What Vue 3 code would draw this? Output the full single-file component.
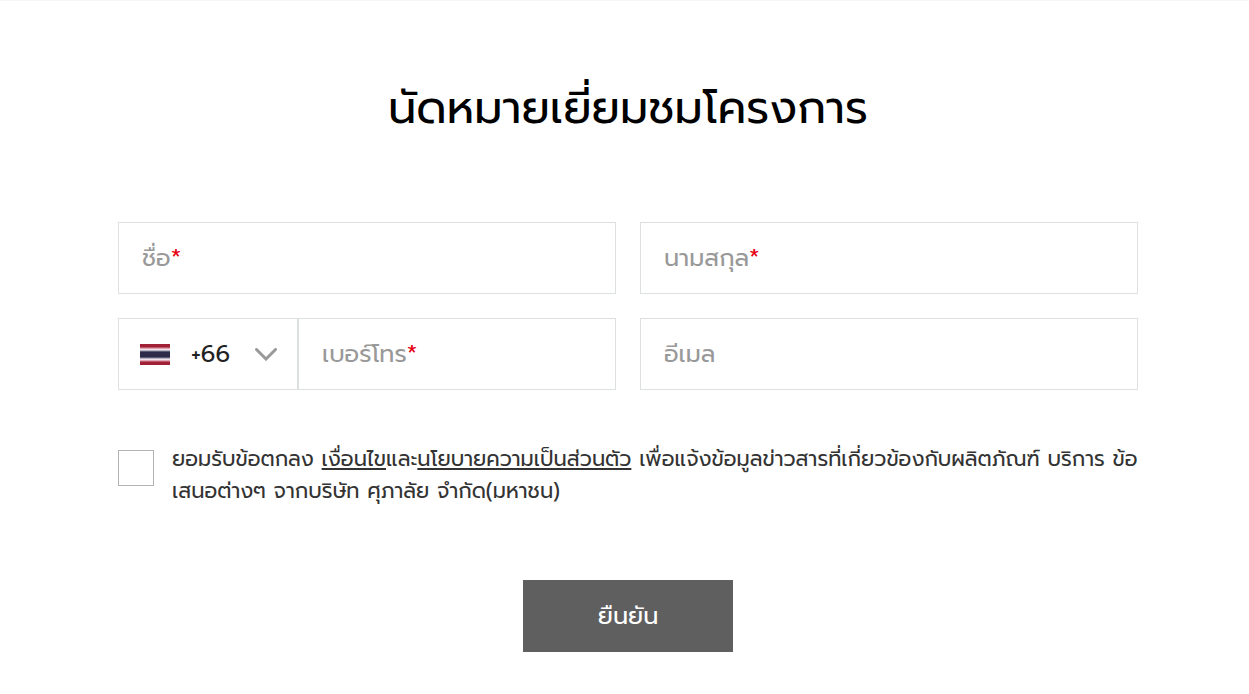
<script setup>
import { reactive } from 'vue'

const form = reactive({ first: '', last: '', phone: '', email: '', code: '+66', accepted: false })
</script>

<template>
  <main class="page">
    <h1 class="title">นัดหมายเยี่ยมชมโครงการ</h1>
    <form class="form" @submit.prevent>
      <div class="grid">
        <div class="field">
          <input id="first" v-model="form.first" class="text" type="text" placeholder=" " required />
          <label class="hint" for="first">ชื่อ<span class="star">*</span></label>
        </div>
        <div class="field">
          <input id="last" v-model="form.last" class="text" type="text" placeholder=" " required />
          <label class="hint" for="last">นามสกุล<span class="star">*</span></label>
        </div>
        <div class="phone">
          <div class="country">
            <svg class="flag" viewBox="0 0 32 24" aria-hidden="true">
              <defs>
                <linearGradient id="stripes" x1="0" y1="0" x2="0" y2="1">
                  <stop offset="0" stop-color="#a02035" />
                  <stop offset="0.14" stop-color="#a02035" />
                  <stop offset="0.19" stop-color="#d58598" />
                  <stop offset="0.26" stop-color="#f5e4ea" />
                  <stop offset="0.32" stop-color="#a9abbd" />
                  <stop offset="0.38" stop-color="#2d2a4a" />
                  <stop offset="0.62" stop-color="#2d2a4a" />
                  <stop offset="0.68" stop-color="#a9abbd" />
                  <stop offset="0.74" stop-color="#f5e4ea" />
                  <stop offset="0.81" stop-color="#d58598" />
                  <stop offset="0.86" stop-color="#a02035" />
                  <stop offset="1" stop-color="#a02035" />
                </linearGradient>
              </defs>
              <rect x="1" y="2" width="30" height="21" fill="url(#stripes)" />
            </svg>
            <select v-model="form.code" class="code" aria-label="รหัสประเทศ">
              <option>+66</option>
            </select>
            <svg class="chevron" viewBox="0 0 22 13" aria-hidden="true">
              <path d="M1.5 1.5 11 11 20.5 1.5" fill="none" stroke="#999" stroke-width="3" stroke-linecap="round" />
            </svg>
          </div>
          <div class="field number">
            <input id="phone" v-model="form.phone" class="text" type="tel" placeholder=" " required />
            <label class="hint" for="phone">เบอร์โทร<span class="star">*</span></label>
          </div>
        </div>
        <div class="field">
          <input id="email" v-model="form.email" class="text" type="email" placeholder=" " />
          <label class="hint" for="email">อีเมล</label>
        </div>
      </div>
      <div class="consent">
        <input id="accept" v-model="form.accepted" class="check" type="checkbox" />
        <label class="terms" for="accept">ยอมรับข้อตกลง <a href="#terms">เงื่อนไข</a>และ<a href="#privacy">นโยบายความเป็นส่วนตัว</a> เพื่อแจ้งข้อมูลข่าวสารที่เกี่ยวข้องกับผลิตภัณฑ์ บริการ ข้อเสนอต่างๆ จากบริษัท ศุภาลัย จำกัด(มหาชน)</label>
      </div>
      <button class="submit" type="submit">ยืนยัน</button>
    </form>
  </main>
</template>

<style>
body {
  background: #fff;
}
</style>

<style scoped>
.page {
  box-sizing: border-box;
  padding: 73px 111px 42px 118px;
  border-top: 1px solid #f5f5f5;
  font-family: Prompt, "Noto Sans Thai", "Noto Sans", sans-serif;
  color: #333;
}
.title {
  margin: 0 0 79px;
  font-size: 45px;
  line-height: 69px;
  font-weight: 400;
  text-align: center;
  color: #000;
}
.form {
  display: flex;
  flex-direction: column;
}
.grid {
  display: grid;
  grid-template-columns: 1fr 1fr;
  gap: 24px;
}
.field {
  display: grid;
  align-items: center;
}
.text,
.hint {
  grid-area: 1 / 1;
}
.text {
  box-sizing: border-box;
  width: 100%;
  height: 72px;
  padding: 0 24px;
  border: 1px solid #dde0e1;
  border-radius: 0;
  background: #fff;
  font: inherit;
  font-size: 24px;
}
.hint {
  padding: 0 24px;
  font-size: 24px;
  line-height: 36px;
  color: #999;
  pointer-events: none;
}
.text:not(:placeholder-shown) + .hint {
  visibility: hidden;
}
.star {
  color: #e60012;
}
.phone {
  display: flex;
}
.country {
  box-sizing: border-box;
  display: flex;
  align-items: center;
  width: 180px;
  padding: 0 20px;
  border: 1px solid #dde0e1;
}
.number {
  flex: 1;
}
.flag {
  width: 32px;
  height: 24px;
}
.code {
  flex: 1;
  min-width: 0;
  padding: 0 0 0 20px;
  border: 0;
  appearance: none;
  background: transparent;
  font: inherit;
  font-size: 24px;
  color: #222;
}
.chevron {
  width: 22px;
  height: 13px;
}
.consent {
  display: flex;
  align-items: flex-start;
  gap: 18px;
  margin-top: 53px;
}
.check {
  flex: none;
  box-sizing: border-box;
  width: 36px;
  height: 36px;
  margin: 7px 0 0;
  border: 1px solid #b3b3b3;
  appearance: none;
  background: #fff;
}
.check:checked {
  background: #5e5e5e;
}
.terms {
  font-size: 21px;
  line-height: 32px;
}
.terms a {
  color: inherit;
}
.submit {
  align-self: center;
  width: 210px;
  height: 72px;
  margin-top: 73px;
  border: 0;
  background: #5f5f5f;
  font: inherit;
  font-size: 24px;
  color: #fff;
}
</style>
